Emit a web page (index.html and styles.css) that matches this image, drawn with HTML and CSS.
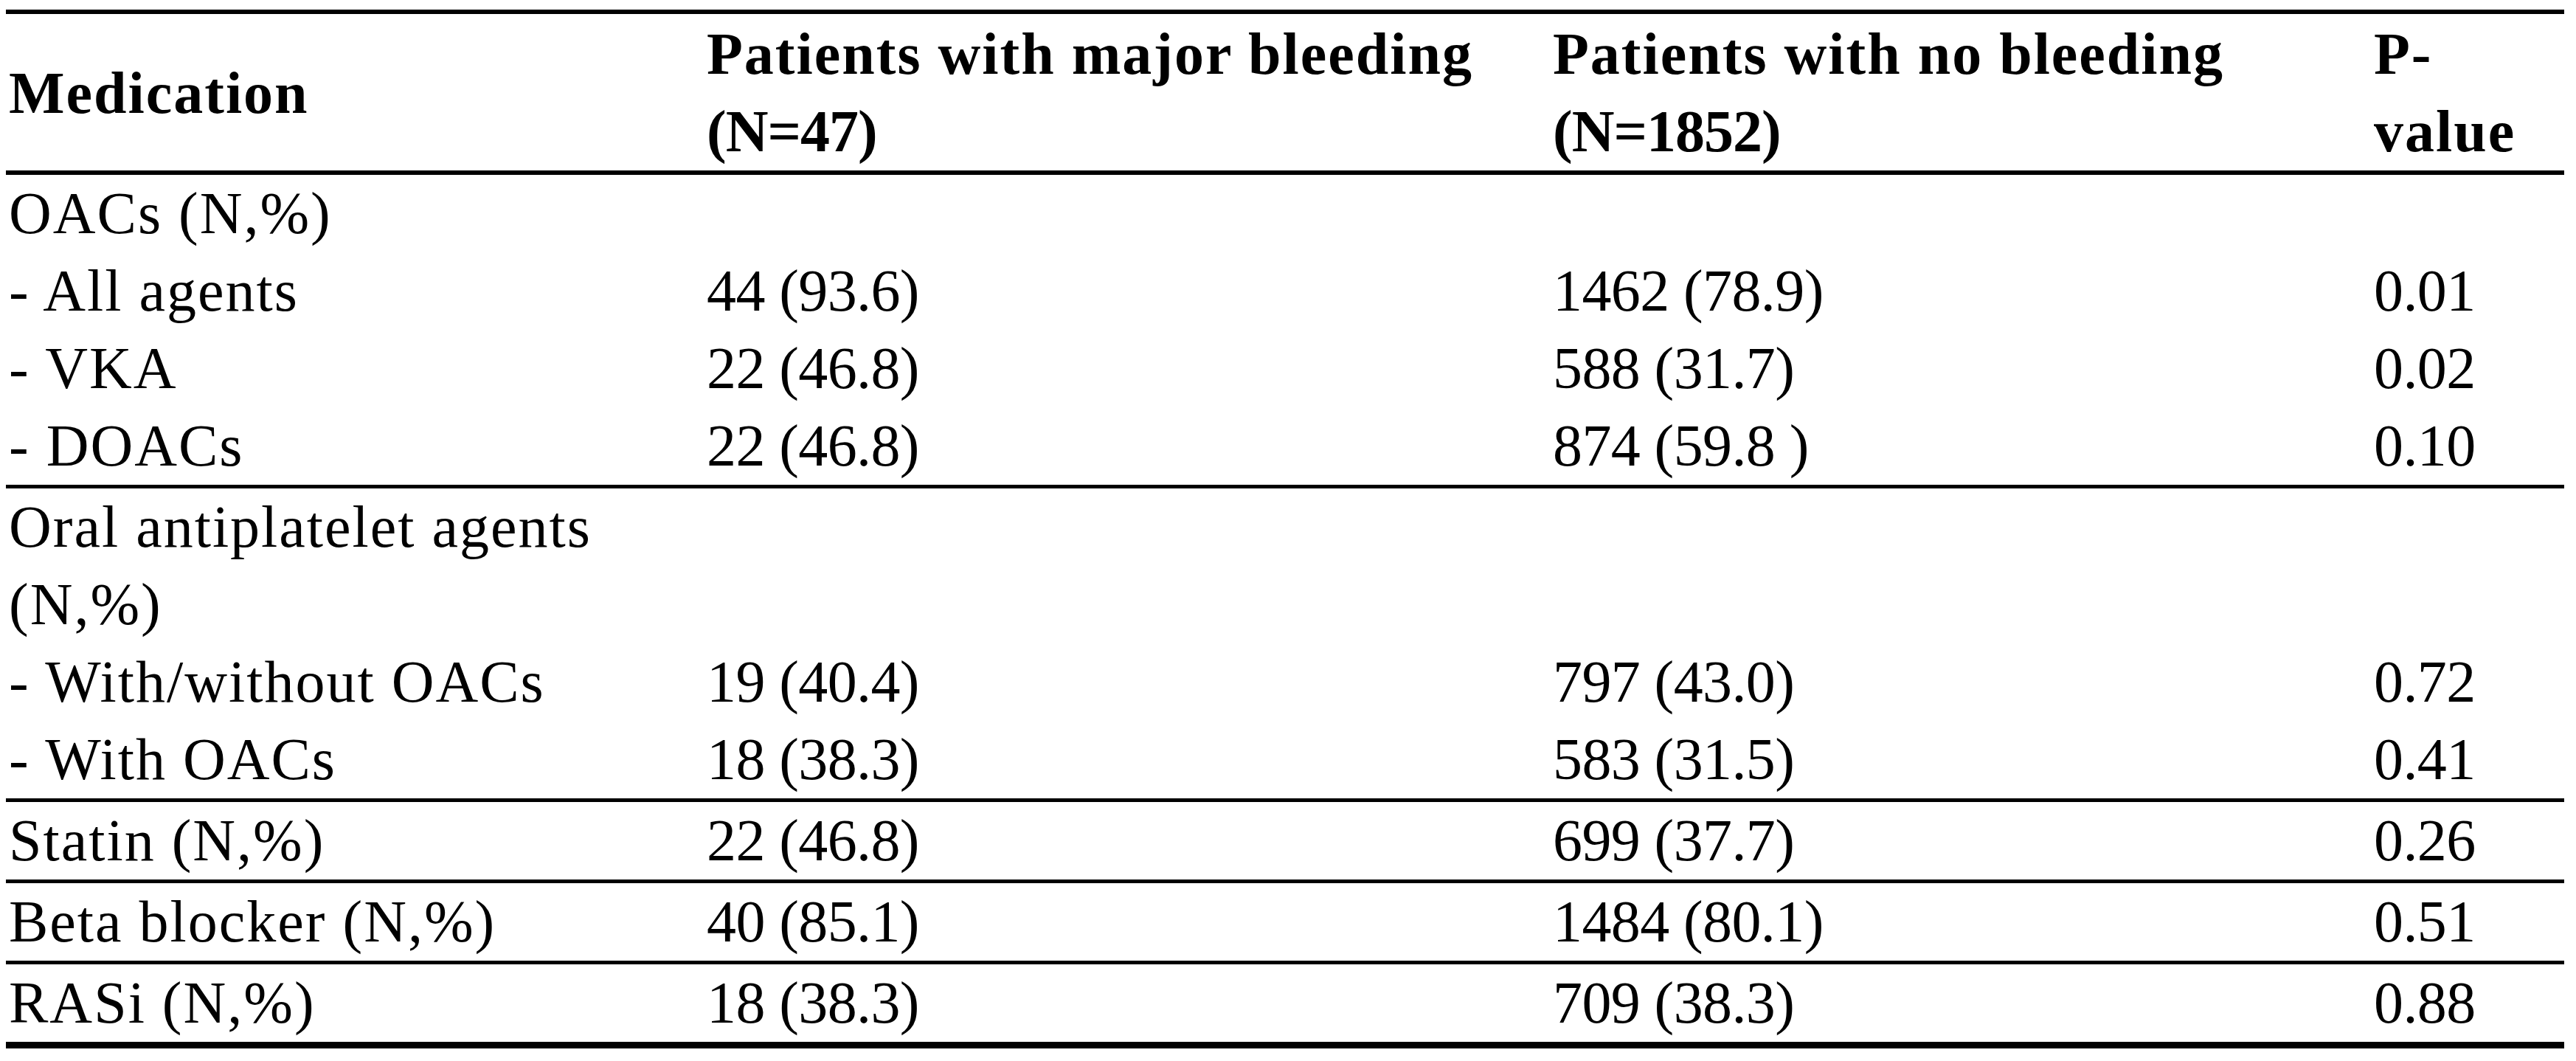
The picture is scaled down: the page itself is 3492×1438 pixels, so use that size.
FILE: index.html
```html
<!DOCTYPE html>
<html lang="en">
<head>
<meta charset="utf-8">
<title>Medication and bleeding</title>
<link rel="stylesheet" href="styles.css">
</head>
<body>
<table class="med-table">
  <colgroup>
    <col class="c1">
    <col class="c2">
    <col class="c3">
    <col class="c4">
  </colgroup>
  <thead>
    <tr>
      <th class="mid">Medication</th>
      <th>Patients with major bleeding<br><span class="n">(N=47)</span></th>
      <th>Patients with no bleeding<br><span class="n">(N=1852)</span></th>
      <th>P-<br>value</th>
    </tr>
  </thead>
  <tbody class="group">
    <tr><td>OACs (N,%)</td><td></td><td></td><td></td></tr>
    <tr><td>- All agents</td><td>44 (93.6)</td><td>1462 (78.9)</td><td>0.01</td></tr>
    <tr><td>- VKA</td><td>22 (46.8)</td><td>588 (31.7)</td><td>0.02</td></tr>
    <tr><td>- DOACs</td><td>22 (46.8)</td><td>874 (59.8 )</td><td>0.10</td></tr>
  </tbody>
  <tbody class="group">
    <tr><td>Oral antiplatelet agents<br>(N,%)</td><td></td><td></td><td></td></tr>
    <tr><td>- With/without OACs</td><td>19 (40.4)</td><td>797 (43.0)</td><td>0.72</td></tr>
    <tr><td>- With OACs</td><td>18 (38.3)</td><td>583 (31.5)</td><td>0.41</td></tr>
  </tbody>
  <tbody class="group">
    <tr><td>Statin (N,%)</td><td>22 (46.8)</td><td>699 (37.7)</td><td>0.26</td></tr>
  </tbody>
  <tbody class="group">
    <tr><td>Beta blocker (N,%)</td><td>40 (85.1)</td><td>1484 (80.1)</td><td>0.51</td></tr>
  </tbody>
  <tbody class="group last">
    <tr><td>RASi (N,%)</td><td>18 (38.3)</td><td>709 (38.3)</td><td>0.88</td></tr>
  </tbody>
</table>
</body>
</html>
```

FILE: styles.css
```css
html, body {
  background: #ffffff;
}

body {
  margin: 13px 0 0 8px;
  font-family: "Liberation Serif", "Times New Roman", serif;
  color: #000000;
}

.med-table {
  width: 3468px;
  table-layout: fixed;
  border-collapse: collapse;
  font-size: 80px;
  line-height: 105px;
}

.c1 { width: 946px; }
.c2 { width: 1147px; }
.c3 { width: 1113px; }
.c4 { width: 262px; }

.med-table th {
  font-weight: bold;
  text-align: left;
  vertical-align: top;
  padding: 2px 0 0 4px;
  letter-spacing: 2px;
  border-top: 6px solid #000;
  border-bottom: 6px solid #000;
  white-space: nowrap;
}

.med-table th.mid {
  vertical-align: middle;
}

.med-table th .n {
  letter-spacing: -1px;
}

.med-table td {
  text-align: left;
  vertical-align: top;
  padding: 0 0 0 4px;
  letter-spacing: -0.6px;
  white-space: nowrap;
}

.med-table td:first-child {
  letter-spacing: 2px;
}

.group tr:last-child td {
  border-bottom: 5px solid #000;
}

.group.last tr:last-child td {
  border-bottom: 9px solid #000;
}
```
